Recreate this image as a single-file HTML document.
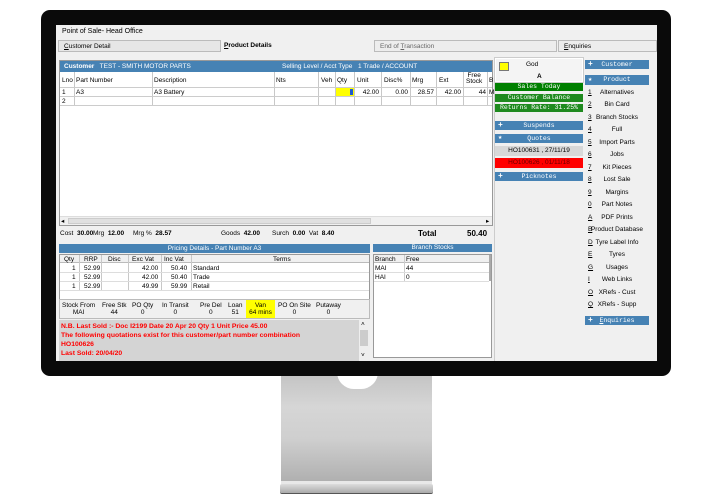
<!DOCTYPE html>
<html><head><meta charset="utf-8"><style>
*{margin:0;padding:0;box-sizing:border-box}
body{width:715px;height:503px;background:#fff;position:relative;overflow:hidden;font-family:"Liberation Sans",sans-serif;font-size:6.5px;color:#000}
.a{position:absolute;white-space:nowrap}
.blue{background:#4682b4;color:#fff}
.bz{position:absolute;left:41px;top:10px;width:630px;height:366px;background:#0a0a0a;border-radius:9px}
.scr{position:absolute;left:56px;top:25px;width:601px;height:336px;background:#f0f0f0;overflow:hidden}
.c{position:absolute;border-right:1px solid #c8c8c8;height:100%;top:0}
.mono{font-family:"Liberation Mono",monospace}
.mi{position:absolute;left:529px;width:64px;text-align:center}
.mn{position:absolute;left:532px;text-decoration:underline}
</style></head><body>
<div class="a" style="left:281px;top:375px;width:151px;height:106px;background:linear-gradient(#c4c4c4,#d6d6d6 30%,#cfcfcf 60%,#b0b0b0)"></div>
<div class="a" style="left:337px;top:372px;width:41px;height:17px;background:#fff;border-radius:0 0 20px 20px"></div>
<div class="a" style="left:281px;top:481px;width:151px;height:3px;background:#e8e8e8"></div>
<div class="a" style="left:280px;top:484px;width:153px;height:10px;background:linear-gradient(#ddd,#aaa);border-radius:2px;border-bottom:1px solid #555"></div>
<div class="bz"></div>
<div class="scr">
<div class="a" style="left:6px;top:3px;font-size:7px">Point of Sale- Head Office</div>
<div class="a" style="left:2px;top:15px;width:163px;height:12px;border:1px solid #bbb;background:#e6e6e6;padding:2px 5px"><u>C</u>ustomer Detail</div>
<div class="a" style="left:168px;top:17px;font-weight:bold"><u>P</u>roduct Details</div>
<div class="a" style="left:318px;top:15px;width:183px;height:12px;border:1px solid #bbb;background:#ededed;padding:2px 5px;color:#666">End of <u>T</u>ransaction</div>
<div class="a" style="left:502px;top:15px;width:99px;height:12px;border:1px solid #bbb;background:#ededed;padding:2px 5px"><u>E</u>nquiries</div>
<div class="a" style="left:3px;top:35px;width:434px;height:166px;background:#fff;border:1px solid #999">
 <div class="a blue" style="left:0;top:0;width:432px;height:11px;padding:2px 4px"><b>Customer</b>&nbsp;&nbsp; TEST - SMITH MOTOR PARTS<span style="position:absolute;left:222px">Selling Level / Acct Type</span><span style="position:absolute;left:298px">1 Trade / ACCOUNT</span></div>
 <div class="a" style="left:0;top:11px;width:432px;height:16px;background:#fff;border-bottom:1px solid #ccc">
  <div class="c" style="left:14px"></div><div class="c" style="left:92px"></div><div class="c" style="left:214px"></div><div class="c" style="left:258px"></div><div class="c" style="left:275px"></div><div class="c" style="left:294px"></div><div class="c" style="left:321px"></div><div class="c" style="left:350px"></div><div class="c" style="left:376px"></div><div class="c" style="left:403px"></div><div class="c" style="left:427px"></div>
  <span class="a" style="left:2px;top:5px">Lno</span><span class="a" style="left:16px;top:5px">Part Number</span><span class="a" style="left:94px;top:5px">Description</span><span class="a" style="left:216px;top:5px">Nts</span><span class="a" style="left:261px;top:5px">Veh</span><span class="a" style="left:277px;top:5px">Qty</span><span class="a" style="left:297px;top:5px">Unit</span><span class="a" style="left:324px;top:5px">Disc%</span><span class="a" style="left:352px;top:5px">Mrg</span><span class="a" style="left:379px;top:5px">Ext</span><span class="a" style="left:406px;top:1px;line-height:6px;text-align:center">Free<br>Stock</span><span class="a" style="left:429px;top:5px">B</span>
 </div>
 <div class="a" style="left:0;top:27px;width:432px;height:9px;border-bottom:1px solid #ccc">
  <div class="c" style="left:14px"></div><div class="c" style="left:92px"></div><div class="c" style="left:214px"></div><div class="c" style="left:258px"></div><div class="c" style="left:275px"></div><div class="c" style="left:294px"></div><div class="c" style="left:321px"></div><div class="c" style="left:350px"></div><div class="c" style="left:376px"></div><div class="c" style="left:403px"></div><div class="c" style="left:427px"></div>
  <div class="a" style="left:276px;top:0;width:18px;height:8px;background:#ff0"></div><div class="a" style="left:290px;top:1px;width:3px;height:6px;background:#1e5ad0"></div>
  <span class="a" style="left:2px;top:1px">1</span><span class="a" style="left:16px;top:1px">A3</span><span class="a" style="left:94px;top:1px">A3 Battery</span><span class="a" style="left:297px;top:1px;width:22px;text-align:right">42.00</span><span class="a" style="left:323px;top:1px;width:25px;text-align:right">0.00</span><span class="a" style="left:352px;top:1px;width:22px;text-align:right">28.57</span><span class="a" style="left:378px;top:1px;width:23px;text-align:right">42.00</span><span class="a" style="left:404px;top:1px;width:22px;text-align:right">44</span><span class="a" style="left:429px;top:1px">M</span>
 </div>
 <div class="a" style="left:0;top:36px;width:432px;height:9px;border-bottom:1px solid #ccc">
  <div class="c" style="left:14px"></div><div class="c" style="left:92px"></div><div class="c" style="left:214px"></div><div class="c" style="left:258px"></div><div class="c" style="left:275px"></div><div class="c" style="left:294px"></div><div class="c" style="left:321px"></div><div class="c" style="left:350px"></div><div class="c" style="left:376px"></div><div class="c" style="left:403px"></div><div class="c" style="left:427px"></div>
  <span class="a" style="left:2px;top:1px">2</span>
 </div>
 <div class="a" style="left:0;top:155px;width:432px;height:9px;background:#f0f0f0;border-top:1px solid #ddd"><div class="a" style="left:8px;top:1px;width:303px;height:6px;background:#e0e0e0;border:1px solid #ccc"></div><span class="a" style="left:1px;top:0">◂</span><span class="a" style="left:426px;top:0">▸</span></div>
</div>
<div class="a" style="left:4px;top:205px">Cost&nbsp; <b>30.00</b></div>
<div class="a" style="left:37px;top:205px">Mrg&nbsp; <b>12.00</b></div>
<div class="a" style="left:77px;top:205px">Mrg %&nbsp; <b>28.57</b></div>
<div class="a" style="left:165px;top:205px">Goods&nbsp; <b>42.00</b></div>
<div class="a" style="left:216px;top:205px">Surch&nbsp; <b>0.00</b>&nbsp; Vat&nbsp; <b>8.40</b></div>
<div class="a" style="left:362px;top:204px;font-size:8px;font-weight:bold">Total</div>
<div class="a" style="left:411px;top:204px;font-size:8px;font-weight:bold">50.40</div>
<div class="a blue" style="left:3px;top:219px;width:311px;height:9px;text-align:center;line-height:9px">Pricing Details - Part Number A3</div>
<div class="a" style="left:3px;top:229px;width:311px;height:64px;background:#fff;border:1px solid #999">
 <div class="a" style="left:0;top:0;width:309px;height:8px;background:#f0f0f0;border-bottom:1px solid #bbb"></div>
 <div class="a" style="left:0;top:0;width:309px;height:36px"><div class="c" style="left:19px"></div><div class="c" style="left:41px"></div><div class="c" style="left:68px"></div><div class="c" style="left:101px"></div><div class="c" style="left:131px"></div></div>
 <span class="a" style="left:4px;top:1px">Qty</span><span class="a" style="left:24px;top:1px">RRP</span><span class="a" style="left:48px;top:1px">Disc</span><span class="a" style="left:72px;top:1px">Exc Vat</span><span class="a" style="left:104px;top:1px">Inc Vat</span><span class="a" style="left:213px;top:1px">Terms</span>
 <div class="a" style="left:0;top:9px;width:309px;line-height:9px">
  <div style="position:relative;height:9px;border-bottom:1px solid #ddd"><span class="a" style="left:12px">1</span><span class="a" style="left:24px">52.99</span><span class="a" style="left:82px">42.00</span><span class="a" style="left:111px">50.40</span><span class="a" style="left:133px">Standard</span></div>
  <div style="position:relative;height:9px;border-bottom:1px solid #ddd"><span class="a" style="left:12px">1</span><span class="a" style="left:24px">52.99</span><span class="a" style="left:82px">42.00</span><span class="a" style="left:111px">50.40</span><span class="a" style="left:133px">Trade</span></div>
  <div style="position:relative;height:9px;border-bottom:1px solid #ddd"><span class="a" style="left:12px">1</span><span class="a" style="left:24px">52.99</span><span class="a" style="left:82px">49.99</span><span class="a" style="left:111px">59.99</span><span class="a" style="left:133px">Retail</span></div>
 </div>
</div>
<div class="a" style="left:3px;top:274px;width:311px;height:20px;background:#f0f0f0;border:1px solid #bbb;line-height:7px;text-align:center">
 <span class="a" style="left:2px;top:2px">Stock From<br>MAI</span><span class="a" style="left:42px;top:2px">Free Stk<br>44</span><span class="a" style="left:72px;top:2px">PO Qty<br>0</span><span class="a" style="left:102px;top:2px">In Transit<br>0</span><span class="a" style="left:140px;top:2px">Pre Del<br>0</span><span class="a" style="left:168px;top:2px">Loan<br>51</span>
 <span class="a" style="left:186px;top:0;width:29px;height:18px;background:#ff0;padding-top:2px">Van<br>64 mins</span>
 <span class="a" style="left:218px;top:2px">PO On Site<br>0</span><span class="a" style="left:256px;top:2px">Putaway<br>0</span>
</div>
<div class="a" style="left:3px;top:295px;width:311px;height:41px;background:#d4d4d4;color:#f00;font-weight:bold;font-size:6.8px;line-height:9px;padding:2px 2px">N.B. Last Sold :- Doc I2199 Date 20 Apr 20 Qty 1 Unit Price 45.00<br>The following quotations exist for this customer/part number combination<br>HO100626<br>Last Sold: 20/04/20</div>
<div class="a" style="left:303px;top:295px;width:11px;height:41px;background:#eee"><div class="a" style="left:1px;top:10px;width:8px;height:16px;background:#ccc"></div><span class="a" style="left:2px;top:1px">˄</span><span class="a" style="left:2px;top:32px">˅</span></div>
<div class="a blue" style="left:317px;top:219px;width:119px;height:8px;text-align:center;line-height:8px">Branch Stocks</div>
<div class="a" style="left:317px;top:229px;width:119px;height:104px;background:#fff;border:1px solid #999">
 <div class="a" style="left:0;top:0;width:115px;height:8px;background:#f0f0f0;border-bottom:1px solid #bbb"></div>
 <div class="a" style="left:30px;top:0;height:26px;border-left:1px solid #ccc"></div>
 <div class="a" style="left:115px;top:0;height:26px;border-left:2px solid #aaa"></div>
 <span class="a" style="left:1px;top:1px">Branch</span><span class="a" style="left:32px;top:1px">Free</span>
 <div class="a" style="left:0;top:17px;width:115px;border-top:1px solid #ddd"></div><div class="a" style="left:0;top:26px;width:115px;border-top:1px solid #ddd"></div>
 <span class="a" style="left:1px;top:10px">MAI</span><span class="a" style="left:32px;top:10px">44</span>
 <span class="a" style="left:1px;top:19px">HAI</span><span class="a" style="left:32px;top:19px">0</span>
</div>
<div class="a" style="left:438px;top:33px;width:93px;height:303px;border-left:1px solid #ccc;background:#f0f0f0"></div>
<div class="a" style="left:439px;top:33px;width:88px;height:24px;background:#f4f4f4;border:1px solid #fff;outline:1px solid #ccc"><div class="a" style="left:3px;top:3px;width:10px;height:9px;background:#ff0;border:1px solid #777"></div><span class="a" style="left:30px;top:2px">God</span><span class="a" style="left:41px;top:14px;font-weight:bold">A</span></div>
<div class="a mono" style="left:439px;top:58px;width:88px;height:8px;background:#008000;color:#fff;text-align:center;line-height:8px;font-size:6.5px">Sales Today</div>
<div class="a mono" style="left:439px;top:69px;width:88px;height:8px;background:#1f8a1f;color:#fff;text-align:center;line-height:8px;font-size:6.5px">Customer Balance</div>
<div class="a mono" style="left:439px;top:79px;width:88px;height:8px;background:#1f8a1f;color:#fff;text-align:center;line-height:8px;font-size:6.5px">Returns Rate: 31.25%</div>
<div class="a blue mono" style="left:439px;top:96px;width:88px;height:9px;line-height:9px;text-align:center">Suspends<b class="a" style="left:3px;top:0;font-size:8px">+</b></div>
<div class="a blue mono" style="left:439px;top:109px;width:88px;height:9px;line-height:9px;text-align:center">Quotes<b class="a" style="left:3px;top:0;font-size:7px">★</b></div>
<div class="a" style="left:439px;top:121px;width:88px;height:10px;background:#d8d8d8;text-align:center;line-height:10px">HO100631 , 27/11/19</div>
<div class="a" style="left:439px;top:133px;width:88px;height:10px;background:#f00;color:#600;text-align:center;line-height:10px">HO100626 , 01/11/18</div>
<div class="a blue mono" style="left:439px;top:147px;width:88px;height:9px;line-height:9px;text-align:center">Picknotes<b class="a" style="left:3px;top:0;font-size:8px">+</b></div>
<div class="a blue mono" style="left:529px;top:35px;width:64px;height:9px;line-height:9px;text-align:center">Customer<b class="a" style="left:3px;top:0;font-size:8px">+</b></div>
<div class="a blue mono" style="left:529px;top:50px;width:64px;height:10px;line-height:10px;text-align:center">Product<b class="a" style="left:3px;top:0;font-size:7px">★</b></div>
<div class="mn" style="top:64px">1</div><div class="mi" style="top:64px">Alternatives</div>
<div class="mn" style="top:76px">2</div><div class="mi" style="top:76px">Bin Card</div>
<div class="mn" style="top:89px">3</div><div class="mi" style="top:89px">Branch Stocks</div>
<div class="mn" style="top:101px">4</div><div class="mi" style="top:101px">Full</div>
<div class="mn" style="top:114px">5</div><div class="mi" style="top:114px">Import Parts</div>
<div class="mn" style="top:126px">6</div><div class="mi" style="top:126px">Jobs</div>
<div class="mn" style="top:139px">7</div><div class="mi" style="top:139px">Kit Pieces</div>
<div class="mn" style="top:151px">8</div><div class="mi" style="top:151px">Lost Sale</div>
<div class="mn" style="top:164px">9</div><div class="mi" style="top:164px">Margins</div>
<div class="mn" style="top:176px">0</div><div class="mi" style="top:176px">Part Notes</div>
<div class="mn" style="top:189px">A</div><div class="mi" style="top:189px">PDF Prints</div>
<div class="mn" style="top:201px">B</div><div class="mi" style="top:201px">Product Database</div>
<div class="mn" style="top:214px">D</div><div class="mi" style="top:214px">Tyre Label Info</div>
<div class="mn" style="top:226px">E</div><div class="mi" style="top:226px">Tyres</div>
<div class="mn" style="top:239px">G</div><div class="mi" style="top:239px">Usages</div>
<div class="mn" style="top:251px">I</div><div class="mi" style="top:251px">Web Links</div>
<div class="mn" style="top:264px">O</div><div class="mi" style="top:264px">XRefs - Cust</div>
<div class="mn" style="top:276px">Q</div><div class="mi" style="top:276px">XRefs - Supp</div>
<div class="a blue mono" style="left:529px;top:291px;width:64px;height:9px;line-height:9px;text-align:center"><u>E</u>nquiries<b class="a" style="left:3px;top:0;font-size:8px">+</b></div>
</div>
</body></html>
